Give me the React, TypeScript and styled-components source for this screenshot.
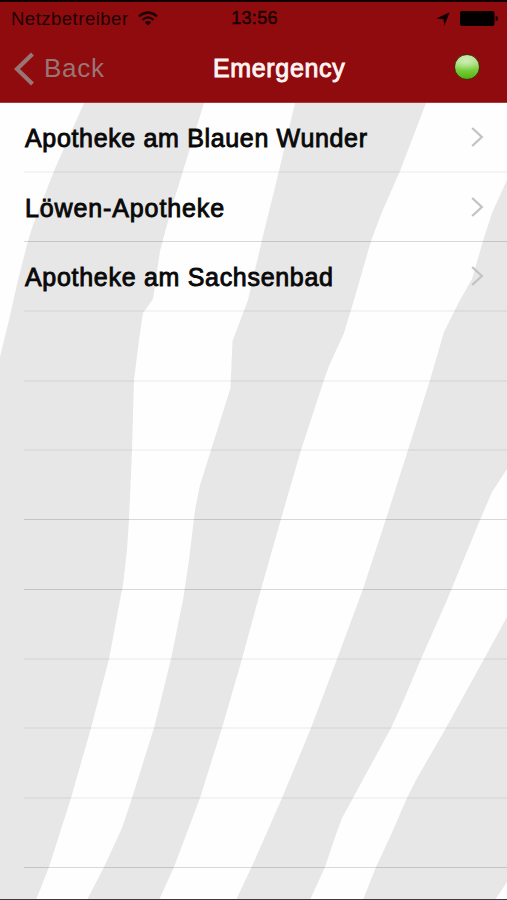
import React from "react";
import styled, { createGlobalStyle } from "styled-components";

const GlobalStyle = createGlobalStyle`
  * { box-sizing: border-box; }
  body {
    margin: 0;
    background: #fefefe;
    font-family: "Liberation Sans", Arial, Helvetica, sans-serif;
  }
`;

const Screen = styled.div`
  position: relative;
  display: flex;
  flex-direction: column;
  width: 507px;
  height: 900px;
  overflow: hidden;
  background: #fefefe;
  border-bottom: 1px solid #3b393b;
`;

const Stripes = styled.svg`
  position: absolute;
  inset: 0;
`;

const Header = styled.header`
  position: relative;
  height: 103px;
  flex: none;
  background: #900b0e;
  border-top: 2px solid #120102;
  border-bottom: 1px solid #a83a3c;
`;

const StatusBar = styled.div`
  display: grid;
  grid-template-columns: 1fr auto 1fr;
  align-items: center;
  height: 33px;
  padding: 0 9px 0 11px;
  color: #1c0203;
`;

const Carrier = styled.div`
  display: flex;
  align-items: center;
  gap: 9px;
  font-size: 18.5px;
  letter-spacing: 0.5px;
`;

const Clock = styled.div`
  font-size: 18px;
  letter-spacing: 0.3px;
  -webkit-text-stroke: 0.5px currentColor;
`;

const Indicators = styled.div`
  display: flex;
  align-items: center;
  justify-content: flex-end;
  gap: 10px;
`;

const NavBar = styled.nav`
  display: grid;
  grid-template-columns: 199px auto 1fr;
  align-items: center;
  height: 67px;
  padding: 0 27px 0 14px;
`;

const BackButton = styled.button`
  justify-self: start;
  display: flex;
  align-items: center;
  gap: 9px;
  padding: 0;
  border: 0;
  background: none;
  color: #987675;
  font: inherit;
  font-size: 26px;
  letter-spacing: 0.7px;
`;

const Title = styled.h1`
  margin: 0;
  color: #fff4f2;
  font-size: 25px;
  font-weight: 400;
  letter-spacing: 0.65px;
  -webkit-text-stroke: 0.9px currentColor;
`;

const StatusLight = styled.span`
  justify-self: end;
  width: 26px;
  height: 26px;
  margin-top: -3px;
  border: 1px solid #4a2a08;
  border-radius: 50%;
  background:
    radial-gradient(ellipse 60% 40% at 45% 26%, rgba(255, 255, 255, 0.45), rgba(255, 255, 255, 0)),
    linear-gradient(#b4e394 0%, #a2dc74 35%, #76cc38 65%, #55b012 100%);
`;

const List = styled.ul`
  position: relative;
  margin: 0;
  padding: 0 0 0 24px;
  list-style: none;
`;

const Row = styled.li<{ $strong: boolean; $height: number }>`
  display: flex;
  align-items: center;
  justify-content: space-between;
  height: ${(p) => p.$height}px;
  padding: 1px 23px 0 1px;
  border-bottom: ${(p) => (p.$strong ? 1 : 2)}px solid
    ${(p) => (p.$strong ? "rgba(0, 0, 0, 0.15)" : "rgba(0, 0, 0, 0.04)")};
`;

const Label = styled.span<{ $spacing: number }>`
  color: #090909;
  font-size: 25px;
  line-height: 30px;
  letter-spacing: ${(p) => p.$spacing}px;
  -webkit-text-stroke: 0.9px currentColor;
`;

const Chevron = styled.svg`
  margin-bottom: 2px;
`;

const rows = [
  { name: "Apotheke am Blauen Wunder", spacing: 0.66, height: 70, strong: false },
  { name: "Löwen-Apotheke", spacing: 0.88, height: 69, strong: true },
  { name: "Apotheke am Sachsenbad", spacing: 0.7, height: 70, strong: false },
  { height: 70, strong: false },
  { height: 69, strong: false },
  { height: 69, strong: true },
  { height: 70, strong: true },
  { height: 70, strong: false },
  { height: 69, strong: false },
  { height: 70, strong: false },
  { height: 69, strong: true },
];

const WifiIcon = () => (
  <svg width="20" height="15" viewBox="0 0 20 15" fill="none" stroke="currentColor" strokeWidth="2.3">
    <path d="M1 5.3Q10-2.4 19 5.3" />
    <path d="M4.4 8.8Q10 4 15.6 8.8" />
    <path d="M6.8 11.3Q10 8.5 13.2 11.3L10 14.5Z" fill="currentColor" stroke="none" />
  </svg>
);

const LocationIcon = () => (
  <svg width="14" height="14" viewBox="0 0 14 14" fill="#120102">
    <path d="M13.7.3 8.3 13.7 7.5 7.2 .3 6.6Z" />
  </svg>
);

const BatteryIcon = () => (
  <svg width="38" height="15" viewBox="0 0 38 15" fill="#050000">
    <rect width="34.5" height="15" rx="2" />
    <path d="M35.7 5Q38 5.3 38 7.5T35.7 10Z" />
  </svg>
);

export default function App() {
  return (
    <Screen>
      <GlobalStyle />
      <Stripes width="507" height="900" viewBox="0 0 507 900" fill="#e7e7e7">
        <path d="M84 103 54 171 33 225 28 241 18 280 9 320 0 357V900H36L49 867 71 798 91 728 109 659 120 600 123 585 127 550 129 519 132 450 134 380 139 340 143 313 153 299 160 251 171 210 183 171 204 103Z" />
        <path d="M295 103 279 171 262 240 248 300 232.500 341 230.500 388 211 450 200 485 195 510 189 560 183 600 171 659 154 728 132 798 122 828 104 867 87 900H159L174 867 200 798 222 728 242 659 258 600 281 519 301 450 324 380 329 366 344 333 354 300 371 241 382 212 400 171 426 103Z" />
        <path d="M507 180 492 213 483 241 472 279 460 300 444 332 430 380 408 450 386 519 363 589 337 659 311 728 282 798 253 864 236 900H310L325 867 334 840 342 818 353 798 391 728 402 704 421 659 447 600 480 520 492 492 507 469Z" />
        <path d="M507 617 484 659 446 728 416 780 407 798 390 837 376 867 363 900H495L507 882Z" />
      </Stripes>
      <Header>
        <StatusBar>
          <Carrier>
            Netzbetreiber
            <WifiIcon />
          </Carrier>
          <Clock>13:56</Clock>
          <Indicators>
            <LocationIcon />
            <BatteryIcon />
          </Indicators>
        </StatusBar>
        <NavBar>
          <BackButton>
            <svg width="21" height="34" viewBox="0 0 21 34" fill="none" stroke="currentColor" strokeWidth="4.2">
              <path d="M18.5 2 3 17 18.5 32" />
            </svg>
            Back
          </BackButton>
          <Title>Emergency</Title>
          <StatusLight />
        </NavBar>
      </Header>
      <List>
        {rows.map((row, i) => (
          <Row key={i} $strong={row.strong} $height={row.height}>
            {row.name && (
              <>
                <Label $spacing={row.spacing ?? 0}>{row.name}</Label>
                <Chevron width="13" height="20" viewBox="0 0 13 20" fill="none" stroke="#c3c3c5" strokeWidth="2.3">
                  <path d="M1.2 1 10.8 10 1.2 19" />
                </Chevron>
              </>
            )}
          </Row>
        ))}
      </List>
    </Screen>
  );
}
